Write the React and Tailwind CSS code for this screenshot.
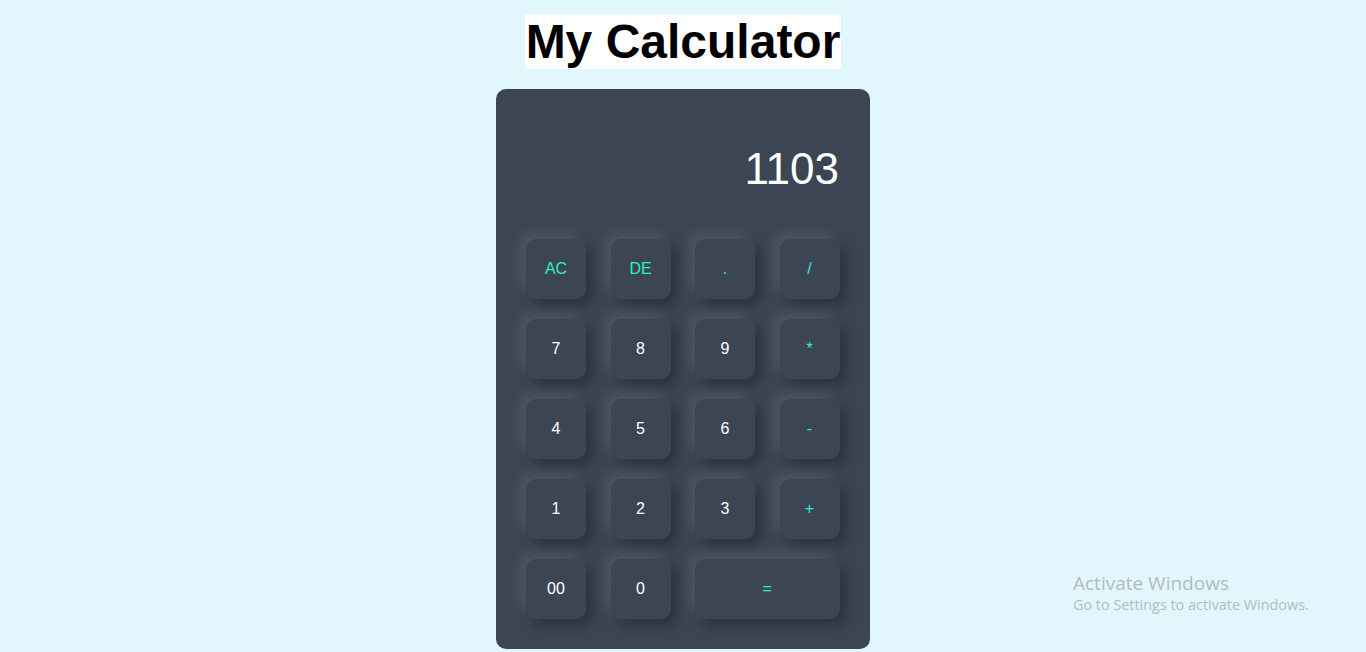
import React from 'react';

const keys = [
    { label: 'AC', op: true },
    { label: 'DE', op: true },
    { label: '.', op: true },
    { label: '/', op: true },
    { label: '7' },
    { label: '8' },
    { label: '9' },
    { label: '*', op: true },
    { label: '4' },
    { label: '5' },
    { label: '6' },
    { label: '-', op: true },
    { label: '1' },
    { label: '2' },
    { label: '3' },
    { label: '+', op: true },
    { label: '00' },
    { label: '0' },
    { label: '=', op: true, wide: true },
];

export default function App() {
    return (
        <div className="min-h-[652px] bg-[#e2f6fe] font-['Liberation_Sans',Arial,sans-serif] relative overflow-hidden">
            <div className="flex flex-col items-center pt-[14px]">
                <h1 className="bg-white text-black font-bold text-[48px] leading-[55px] px-[1px]">
                    My Calculator
                </h1>

                {/* calculator body */}
                <div className="mt-[20px] w-[374px] h-[560px] bg-[#3c4554] rounded-[10px] px-[30px] pt-[30px]">
                    <div className="h-[100px] flex items-center justify-end pr-[1px] text-white text-[44px]">
                        1103
                    </div>
                    <div className="mt-[20px] grid grid-cols-[60px_60px_60px_60px] gap-x-[24.5px] gap-y-[20px]">
                        {keys.map((k) => (
                            <button
                                key={k.label}
                                className={`h-[60px] rounded-[10px] bg-[#3c4554] flex items-center justify-center text-[16px] shadow-[-6px_-6px_14px_rgba(255,255,255,0.1),6px_6px_14px_rgba(0,0,0,0.3)] ${
                                    k.wide ? 'col-span-2' : ''
                                } ${k.op ? 'text-[#2ef0c4]' : 'text-white'}`}
                            >
                                {k.label}
                            </button>
                        ))}
                    </div>
                </div>
            </div>

            {/* windows watermark */}
            <div className="absolute left-[1073px] top-[572px] font-['Open_Sans','Noto_Sans',sans-serif] text-[#b2bcc1] leading-tight">
                <div className="text-[19px]">Activate Windows</div>
                <div className="text-[14.4px]">Go to Settings to activate Windows.</div>
            </div>
        </div>
    );
}
